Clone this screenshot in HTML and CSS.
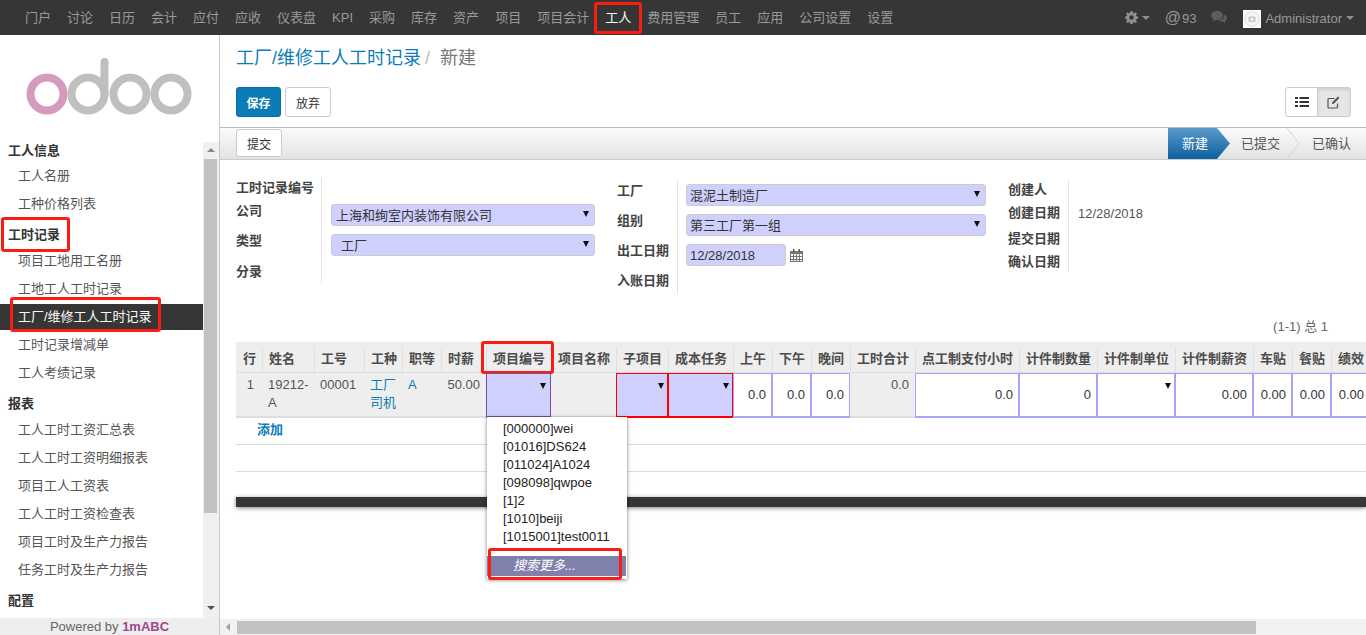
FILE: index.html
```html
<!DOCTYPE html>
<html lang="zh-CN">
  <head>
    <meta charset="UTF-8" />
    <title>工厂/维修工人工时记录</title>
    <link rel="stylesheet" href="styles.css">
  </head>
  <body>
    <header class="topbar">
      <nav class="apps">
        <a>门户</a><a>讨论</a><a>日历</a><a>会计</a><a>应付</a><a>应收</a><a>仪表盘</a><a>KPI</a><a>采购</a><a>库存</a><a>资产</a><a>项目</a><a>项目会计</a>
        <a class="current marked">工人</a>
        <a>费用管理</a><a>员工</a><a>应用</a><a>公司设置</a><a>设置</a>
      </nav>
      <div class="systray">
        <svg class="gear" width="13" height="13" viewBox="0 0 16 16"><path fill="#8f8f8f" fill-rule="evenodd" d="M6.7 0h2.6l.4 2.2 1.3.5L12.900 1.500l1.800 1.800-1.200 1.900.5 1.300 2 .4v2.600l-2 .4-.5 1.300 1.200 1.900-1.800 1.800-1.900-1.200-1.300.5-.4 2.300H6.700l-.4-2.300-1.300-.5-1.900 1.200-1.800-1.800 1.200-1.900-.5-1.300-2-.4V7l2-.4.500-1.300-1.200-1.900 1.800-1.800L5 2.700l1.300-.5zM8 5.300a2.700 2.700 0 1 0 0 5.400 2.700 2.700 0 0 0 0-5.400z"/></svg>
        <i class="caret gray gear-caret"></i>
        <span class="mention"><b>@</b>93</span>
        <svg class="chat" width="16" height="14" viewBox="0 0 16 14"><path fill="#5c5c5c" d="M6 0c3.300 0 6 2 6 4.500S9.300 9 6 9l-1 0-3 2 .7-2.700C1 7.500 0 6.100 0 4.500 0 2 2.700 0 6 0z"/><path fill="#5c5c5c" d="M13 3.500c1.800.7 3 2 3 3.500 0 1.300-.8 2.400-2 3.100l.6 2.400-2.800-1.900c-1.800 0-3.400-.5-4.400-1.400 3.200-.1 5.800-2.300 5.800-5z"/></svg>
        <span class="avatar"><svg width="18" height="18" viewBox="0 0 18 18"><circle cx="9" cy="9" r="7.500" fill="#f4f4f4" stroke="#e2e2e2"/><rect x="5.500" y="6.500" width="7" height="5.500" rx="1" fill="#c9c9c9"/><circle cx="9" cy="9.200" r="1.500" fill="#f4f4f4"/></svg></span>
        <span class="user">Administrator</span>
        <i class="caret gray"></i>
      </div>
    </header>

    <div class="layout">
      <aside class="sidebar">
        <div class="logo">
          <svg width="170" height="58" viewBox="0 0 170 58">
            <g fill="none" stroke-width="8">
              <circle cx="22" cy="36" r="16.500" stroke="#d59bbf"/>
              <circle cx="63" cy="36" r="16.500" stroke="#bfbfbf"/>
              <circle cx="105" cy="36" r="16.500" stroke="#bfbfbf"/>
              <circle cx="146" cy="36" r="16.500" stroke="#bfbfbf"/>
              <path d="M79.500 4v32" stroke="#bfbfbf" stroke-linecap="round"/>
            </g>
          </svg>
        </div>
        <div class="menu-wrap">
          <div class="menu">
            <h4 class="first">工人信息</h4>
            <a>工人名册</a>
            <a>工种价格列表</a>
            <h4><span class="marked mark-group">工时记录</span></h4>
            <a>项目工地用工名册</a>
            <a>工地工人工时记录</a>
            <a class="active"><span class="marked mark-item">工厂/维修工人工时记录</span></a>
            <a>工时记录增减单</a>
            <a>工人考绩记录</a>
            <h4>报表</h4>
            <a>工人工时工资汇总表</a>
            <a>工人工时工资明细报表</a>
            <a>项目工人工资表</a>
            <a>工人工时工资检查表</a>
            <a>项目工时及生产力报告</a>
            <a>任务工时及生产力报告</a>
            <h4>配置</h4>
          </div>
          <div class="vscroll">
            <i class="tri up"></i>
            <div class="vthumb"></div>
            <i class="tri down"></i>
          </div>
        </div>
        <div class="powered">Powered by <b>1mABC</b></div>
      </aside>

      <main class="main">
        <div class="content">
          <div class="page-head">
            <h2 class="breadcrumb"><a>工厂/维修工人工时记录</a><span class="slash">/</span><span>新建</span></h2>
            <div class="actions">
              <div class="btns">
                <button class="btn primary">保存</button>
                <button class="btn">放弃</button>
              </div>
              <div class="switch">
                <button><svg width="14" height="12" viewBox="0 0 14 12"><path fill="#333" d="M0 1h3v2H0zM4.500 1H14v2H4.500zM0 5h3v2H0zM4.500 5H14v2H4.500zM0 9h3v2H0zM4.500 9H14v2H4.500z"/></svg></button>
                <button class="on"><svg width="14" height="14" viewBox="0 0 14 14"><path fill="none" stroke="#555" stroke-width="1.200" d="M10.500 8.500V12a1 1 0 0 1-1 1H2a1 1 0 0 1-1-1V4.500a1 1 0 0 1 1-1h5.500"/><path fill="#555" d="M5 7.500 11 1.500l1.500 1.500-6 6H5z"/></svg></button>
              </div>
            </div>
          </div>

          <div class="statusbar">
            <button class="btn small">提交</button>
            <div class="steps">
              <span class="step now">新建</span>
              <span class="step">已提交</span>
              <svg class="chev" width="14" height="31" viewBox="0 0 14 31"><path d="M1 0l12 15.500L1 31" fill="none" stroke="#d4d4d4"/></svg>
              <span class="step last">已确认</span>
            </div>
          </div>

          <section class="sheet">
            <div class="group g1">
              <div class="labels">
                <label class="l-no">工时记录编号</label>
                <label class="l-company">公司</label>
                <label class="l-type">类型</label>
                <label class="l-entry">分录</label>
              </div>
              <div class="fields">
                <div class="select">上海和绚室内装饰有限公司<i class="caret"></i></div>
                <div class="select indent">工厂<i class="caret"></i></div>
              </div>
            </div>
            <div class="group g2">
              <div class="labels">
                <label>工厂</label>
                <label>组别</label>
                <label>出工日期</label>
                <label>入账日期</label>
              </div>
              <div class="fields">
                <div class="select">混泥土制造厂<i class="caret"></i></div>
                <div class="select">第三工厂第一组<i class="caret"></i></div>
                <div class="date-row">
                  <div class="select date">12/28/2018</div>
                  <svg width="13" height="13" viewBox="0 0 13 13"><path fill="#777" d="M0 2h13v11H0z"/><path fill="#fff" d="M1 5h2v2H1zM4 5h2v2H4zM7 5h2v2H7zM10 5h2v2h-2zM1 8h2v2H1zM4 8h2v2H4zM7 8h2v2H7zM10 8h2v2h-2zM1 11h2v1H1zM4 11h2v1H4zM7 11h2v1H7zM10 11h2v1h-2z"/><path fill="#555" d="M3 0h1.500v3H3zM8.500 0H10v3H8.500z"/></svg>
                </div>
              </div>
            </div>
            <div class="group g3">
              <div class="labels">
                <label>创建人</label>
                <label>创建日期</label>
                <label class="l-submit">提交日期</label>
                <label>确认日期</label>
              </div>
              <div class="fields"><span class="created">12/28/2018</span></div>
            </div>
          </section>

          <div class="pager">(1-1) 总 1</div>

          <table class="lines">
            <colgroup>
              <col style="width:26px"><col style="width:52px"><col style="width:50px"><col style="width:38px"><col style="width:39px"><col style="width:45px"><col style="width:65px"><col style="width:65px"><col style="width:52px"><col style="width:65px"><col style="width:39px"><col style="width:39px"><col style="width:39px"><col style="width:65px"><col style="width:104px"><col style="width:78px"><col style="width:78px"><col style="width:78px"><col style="width:39px"><col style="width:39px"><col style="width:39px">
            </colgroup>
            <thead>
              <tr>
                <th>行</th><th>姓名</th><th>工号</th><th>工种</th><th>职等</th><th>时薪</th>
                <th><span class="marked mark-head">项目编号</span></th>
                <th>项目名称</th><th>子项目</th><th>成本任务</th><th>上午</th><th>下午</th><th>晚间</th><th>工时合计</th><th>点工制支付小时</th><th>计件制数量</th><th>计件制单位</th><th>计件制薪资</th><th>车贴</th><th>餐贴</th><th>绩效</th>
              </tr>
            </thead>
            <tbody>
              <tr class="row">
                <td class="num first-num">1</td>
                <td>19212-A</td>
                <td>00001</td>
                <td class="link">工厂司机</td>
                <td class="link">A</td>
                <td class="num">50.00</td>
                <td class="cell-pick cell-focus">
                  <i class="caret"></i>
                  <ul class="dropdown">
                    <li>[000000]wei</li>
                    <li>[01016]DS624</li>
                    <li>[011024]A1024</li>
                    <li>[098098]qwpoe</li>
                    <li>[1]2</li>
                    <li>[1010]beiji</li>
                    <li>[1015001]test0011</li>
                    <li class="more marked mark-more">搜索更多...</li>
                  </ul>
                </td>
                <td></td>
                <td class="cell-pick cell-req"><i class="caret"></i></td>
                <td class="cell-pick cell-req"><i class="caret"></i></td>
                <td class="cell-in">0.0</td>
                <td class="cell-in">0.0</td>
                <td class="cell-in">0.0</td>
                <td class="num total">0.0</td>
                <td class="cell-in">0.0</td>
                <td class="cell-in">0</td>
                <td class="cell-in unit"><i class="caret"></i></td>
                <td class="cell-in">0.00</td>
                <td class="cell-in">0.00</td>
                <td class="cell-in">0.00</td>
                <td class="cell-in">0.00</td>
              </tr>
              <tr class="add"><td colspan="21"><a>添加</a></td></tr>
              <tr class="add"><td colspan="21"></td></tr>
            </tbody>
          </table>
          <div class="sheet-end"></div>
        </div>
        <div class="hscroll">
          <i class="tri left"></i>
          <div class="hthumb"></div>
        </div>
      </main>
    </div>
  </body>
</html>
```

FILE: styles.css
```css
* {
  box-sizing: border-box;
}

html, body {
  margin: 0;
  height: 100%;
  overflow: hidden;
}

body {
  display: flex;
  flex-direction: column;
  font-family: "Liberation Sans", "Noto Sans CJK SC", sans-serif;
  font-size: 13px;
  color: #4c4c4c;
  background: #fff;
}

.caret {
  display: inline-block;
  width: 0;
  height: 0;
  border-left: 3.5px solid transparent;
  border-right: 3.5px solid transparent;
  border-top: 6px solid #111;
}

.caret.gray {
  border-left-width: 4px;
  border-right-width: 4px;
  border-top: 4px solid #8f8f8f;
}

/* red marks drawn over the screenshot */
.marked {
  position: relative;
}

.marked::after {
  content: "";
  position: absolute;
  border: 3px solid #fb1d12;
  border-radius: 3px;
  pointer-events: none;
}

/* top bar */
.topbar {
  flex: none;
  height: 35px;
  background: #363636;
  display: flex;
  justify-content: space-between;
  align-items: center;
  padding-left: 17px;
  color: #999;
}

.apps {
  display: flex;
}

.apps a {
  padding: 0 8px;
  line-height: 35px;
  color: #999;
  white-space: nowrap;
}

.apps a.current {
  color: #fff;
}

.apps a.marked::after {
  top: 2px;
  bottom: 1px;
  left: -3px;
  right: -3px;
}

.systray {
  display: flex;
  align-items: center;
  padding-right: 12px;
}

.gear-caret {
  margin: 0 0 0 4px;
}

.mention {
  margin-left: 15px;
  font-size: 13px;
}

.mention b {
  font-weight: normal;
  font-size: 16px;
  margin-right: 1px;
}

.chat {
  margin-left: 15px;
}

.avatar {
  width: 18px;
  height: 18px;
  background: #fff;
  margin: 2px 0 0 16px;
  display: block;
}

.avatar svg {
  display: block;
}

.user {
  margin: 1px 4px 0 4px;
  font-size: 13px;
}

/* layout */
.layout {
  flex: 1;
  display: flex;
  min-height: 0;
}

.sidebar {
  flex: none;
  width: 220px;
  border-right: 1px solid #c8c8c8;
  display: flex;
  flex-direction: column;
}

.logo {
  flex: none;
  height: 107px;
  padding: 23px 0 0 25px;
}

.logo svg {
  display: block;
}

.menu-wrap {
  flex: 1;
  min-height: 0;
  display: flex;
}

.menu {
  flex: 1;
  overflow: hidden;
}

.menu h4 {
  margin: 0;
  padding: 7px 0 0 8px;
  height: 29px;
  line-height: 20px;
  font-size: 13px;
  font-weight: bold;
  color: #333;
}

.menu h4.first {
  height: 20px;
  padding-top: 0;
  line-height: 17px;
  margin-bottom: 0;
}

.menu a {
  display: block;
  height: 28px;
  line-height: 28px;
  padding-left: 18px;
  color: #555;
  white-space: nowrap;
}

.menu a.active {
  background: #363636;
  color: #fff;
  height: 26px;
  line-height: 26px;
  margin: 1px 0;
}

.mark-group, .mark-item {
  display: inline-block;
}

.mark-group::after {
  top: -8px;
  bottom: -7px;
  left: -7px;
  right: -10px;
}

.mark-item::after {
  top: -7px;
  bottom: -2px;
  left: -8px;
  right: -9px;
}

.vscroll {
  flex: none;
  width: 16px;
  background: #f0f0f0;
  display: flex;
  flex-direction: column;
  align-items: center;
  padding: 6px 1px 8px 0;
}

.vthumb {
  width: 13px;
  height: 354px;
  margin-top: 7px;
  background: #c1c1c1;
}

.tri {
  display: block;
  width: 0;
  height: 0;
  border: 4px solid transparent;
}

.tri.up {
  border-top: 0;
  border-bottom: 4px solid #888;
}

.tri.down {
  margin-top: auto;
  border-bottom: 0;
  border-top: 4px solid #505050;
}

.tri.left {
  border-left: 0;
  border-right: 4px solid #a0a0a0;
}

.powered {
  flex: none;
  height: 17px;
  line-height: 17px;
  background: #eeeeee;
  text-align: center;
  font-size: 13px;
  color: #666;
}

.powered b {
  color: #a24689;
}

/* main */
.main {
  flex: 1;
  min-width: 0;
  display: flex;
  flex-direction: column;
}

.content {
  flex: 1;
  min-height: 0;
  overflow: hidden;
}

.page-head {
  height: 92px;
  padding: 10px 15px 0 16px;
}

.breadcrumb {
  margin: 0;
  height: 26px;
  line-height: 26px;
  font-size: 18px;
  font-weight: normal;
  color: #777;
}

.breadcrumb a {
  color: #0b7cb5;
}

.slash {
  color: #bbb;
  margin: 0 10px 0 4px;
}

.actions {
  display: flex;
  justify-content: space-between;
  margin-top: 16px;
}

.btns {
  display: flex;
  gap: 4px;
}

.btn {
  font: inherit;
  font-size: 12px;
  height: 30px;
  width: 46px;
  padding: 0;
  background: #fff;
  border: 1px solid #ccc;
  border-radius: 3px;
  color: #333;
}

.btn.primary {
  width: 45px;
  background: #0b7cb5;
  border-color: #0a6fa3;
  color: #fff;
  font-weight: bold;
}

.btn.small {
  height: 28px;
  width: 46px;
  margin-left: 16px;
  margin-top: 1px;
}

.switch {
  display: flex;
}

.switch button {
  width: 33px;
  height: 30px;
  padding: 0;
  background: #fff;
  border: 1px solid #ccc;
  border-radius: 3px 0 0 3px;
  display: flex;
  align-items: center;
  justify-content: center;
}

.switch button.on {
  background: #e6e6e6;
  border-left: 0;
  border-radius: 0 3px 3px 0;
  box-shadow: inset 0 2px 3px rgba(0, 0, 0, 0.1);
}

.statusbar {
  height: 33px;
  border-top: 1px solid #bbb;
  border-bottom: 1px solid #ccc;
  background: linear-gradient(#fcfcfc, #e2e2e2);
  display: flex;
  justify-content: space-between;
}

.steps {
  display: flex;
  align-items: stretch;
  padding-right: 15px;
}

.step {
  line-height: 31px;
  padding: 0 6px 0 11px;
  color: #555;
}

.step.now {
  width: 62px;
  padding-left: 14px;
  background: linear-gradient(#5a9bca, #0d60a0);
  color: #fff;
  clip-path: polygon(0 0, 49px 0, 100% 50%, 49px 100%, 0 100%);
}

.step.last {
  padding: 0 0 0 12px;
}

.chev {
  display: block;
}

/* form */
.sheet {
  display: flex;
  height: 160px;
  padding: 18px 0 0 16px;
}

.group {
  display: flex;
  align-items: flex-start;
}

.labels {
  border-right: 1px solid #e4e4e4;
  display: flex;
  flex-direction: column;
}

.labels label {
  font-weight: bold;
  color: #444;
  line-height: 18px;
}

.g1 {
  width: 381px;
}

.g1 .labels {
  width: 86px;
  height: 105px;
}

.l-no {
  margin-top: 1px;
}

.l-company {
  margin-top: 5px;
}

.l-type {
  margin-top: 12px;
}

.l-entry {
  margin-top: 13px;
}

.g1 .fields {
  width: 264px;
  margin-left: 9px;
  padding-top: 26px;
}

.select {
  position: relative;
  height: 22px;
  line-height: 21px;
  background: #d0d0ff;
  border: 1px solid #ccc;
  border-radius: 3px;
  padding-left: 4px;
  color: #333;
  margin-bottom: 8px;
}

.select.indent {
  padding-left: 9px;
}

.select .caret {
  position: absolute;
  right: 5px;
  top: 6px;
}

.g2 {
  width: 391px;
}

.g2 .labels {
  width: 61px;
  height: 114px;
  padding-top: 2px;
  margin-top: 2px;
}

.g2 .labels label {
  margin-bottom: 12px;
}

.g2 .fields {
  width: 300px;
  margin: 6px 0 0 8px;
}

.g2 .select {
  padding-left: 3px;
}

.date-row {
  display: flex;
  align-items: center;
  gap: 4px;
}

.select.date {
  width: 100px;
  margin-bottom: 0;
}

.g3 .labels {
  width: 61px;
  height: 92px;
  padding-top: 1px;
  margin-top: 2px;
}

.g3 .labels label {
  margin-bottom: 5px;
}

.g3 .labels .l-submit {
  margin-top: 3px;
}

.created {
  display: block;
  margin: 28px 0 0 9px;
  line-height: 16px;
  color: #555;
}

.pager {
  height: 22px;
  line-height: 18px;
  text-align: right;
  padding-right: 38px;
  color: #666;
  margin-top: -2px;
  margin-bottom: 2px;
}

/* lines table */
.lines {
  margin-left: 16px;
  table-layout: fixed;
  border-collapse: separate;
  border-spacing: 0;
  width: 1134px;
}

.lines th {
  height: 31px;
  padding: 1px 0 0 7px;
  text-align: left;
  font-size: 13px;
  font-weight: bold;
  color: #4c4c4c;
  white-space: nowrap;
  background: #eeeeee linear-gradient(#e0e0e0, #e0e0e0) left bottom / 1px 25px no-repeat;
  border-bottom: 1px solid #ddd;
}

.lines th:first-child {
  background-image: none;
}

.mark-head::after {
  top: -10px;
  bottom: -8px;
  left: -12px;
  right: -9px;
}

.row td {
  height: 45px;
  padding: 3px 4px 0 6px;
  vertical-align: top;
  background: #eeeeee;
  line-height: 18px;
  border-bottom: 2px solid #ddd;
  color: #555;
  word-break: break-all;
}

.row td.num {
  text-align: right;
  padding-right: 6px;
}

.row td.first-num {
  padding-right: 8px;
}

.row td.link {
  color: #0b7cb5;
}

.row td.total {
  padding-right: 6px;
}

.row td.cell-pick, .row td.cell-in {
  position: relative;
  padding: 0;
  background: #d0d0ff;
}

.cell-focus {
  border: 1px solid #7b4f96;
  border-bottom-width: 2px;
}

.row td.cell-focus {
  border-bottom-color: #7b4f96;
}

.cell-req {
  border: 1px solid #f00;
}

.row td.cell-req {
  border-bottom-color: #f00;
}

.row .cell-pick > .caret, .row .unit > .caret {
  position: absolute;
  right: 3px;
  top: 9px;
}

.row .cell-focus > .caret {
  right: 4px;
}

.row td.cell-in {
  background: #fff;
  border: 1px solid #a5a5ff;
  border-bottom-width: 2px;
  text-align: right;
  padding: 0 5px 0 0;
  line-height: 42px;
  color: #333;
}

.dropdown {
  position: absolute;
  top: 100%;
  left: 0;
  z-index: 5;
  width: 140px;
  margin: 1px 0 0;
  padding: 3px 0 3px;
  list-style: none;
  background: #fff;
  box-shadow: 0 1px 4px rgba(0, 0, 0, 0.5);
  color: #222;
  word-break: normal;
}

.dropdown li {
  height: 18px;
  line-height: 18px;
  padding-left: 16px;
  white-space: nowrap;
}

.dropdown .more {
  height: 20px;
  line-height: 20px;
  margin: 10px 1px 0 0;
  padding-left: 26px;
  background: #8080ad;
  color: #fff;
  font-style: italic;
}

.mark-more::after {
  top: -8px;
  bottom: -4px;
  left: 1px;
  right: 4px;
}

.add td {
  height: 27px;
  padding: 0 0 5px 21px;
  border-bottom: 1px solid #ddd;
  color: #0b7cb5;
  font-weight: bold;
}

.sheet-end {
  height: 10px;
  margin: 25px 0 0 16px;
  background: #363636;
  box-shadow: 0 1px 4px rgba(0, 0, 0, 0.5);
}

.hscroll {
  flex: none;
  height: 16px;
  background: #f1f1f1;
  display: flex;
  align-items: center;
  padding-left: 6px;
}

.hthumb {
  width: 1019px;
  height: 13px;
  margin-left: 7px;
  background: #c1c1c1;
}
```
